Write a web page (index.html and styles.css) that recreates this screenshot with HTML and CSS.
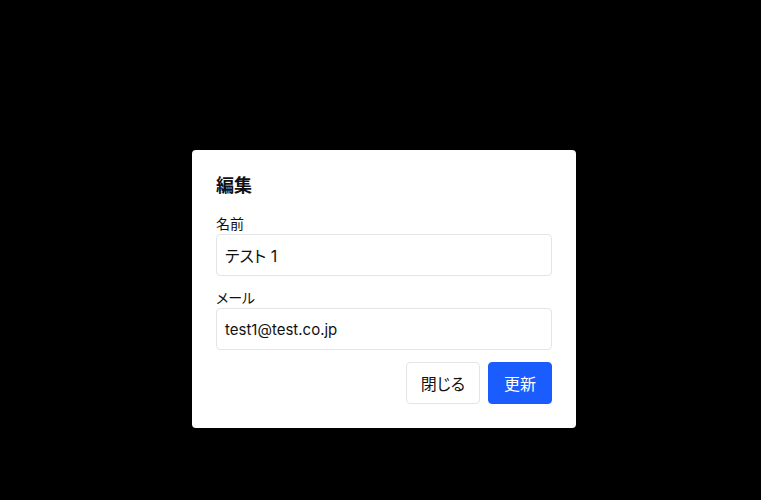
FILE: index.html
```html
<!DOCTYPE html>
<html lang="ja">
<head>
<meta charset="utf-8">
<title>編集</title>
<link rel="stylesheet" href="styles.css">
</head>
<body>
<div class="backdrop">
  <div class="modal">
    <h2 class="title">編集</h2>
    <div class="field">
      <label class="label">名前</label>
      <div class="input">テスト 1</div>
    </div>
    <div class="field">
      <label class="label">メール</label>
      <div class="input latin">test1@test.co.jp</div>
    </div>
    <div class="actions">
      <button class="btn btn-secondary">閉じる</button>
      <button class="btn btn-primary">更新</button>
    </div>
  </div>
</div>
</body>
</html>
```

FILE: styles.css
```css
html, body {
  margin: 0;
  padding: 0;
  background: #000;
  height: 100%;
}
body {
  font-family: Inter, "Noto Sans CJK JP", sans-serif;
  font-feature-settings: "palt";
  color: #111;
}
.backdrop {
  padding: 150px 0 0 192px;
}
.modal {
  width: 384px;
  box-sizing: border-box;
  background: #fff;
  border-radius: 4px;
  padding: 24px;
  display: flex;
  flex-direction: column;
}
.title {
  margin: 0 0 16px;
  font-size: 18px;
  line-height: 24px;
  font-weight: 700;
}
.field {
  display: flex;
  flex-direction: column;
  margin-bottom: 12px;
}
.label {
  font-size: 14px;
  line-height: 20px;
}
.input {
  height: 42px;
  box-sizing: border-box;
  border: 1px solid #e3e5e9;
  border-radius: 4px;
  padding: 0 8px;
  display: flex;
  align-items: center;
  font-size: 16px;
}
.latin {
  font-size: 15px;
}
.actions {
  display: flex;
  justify-content: flex-end;
  gap: 8px;
}
.btn {
  height: 42px;
  padding: 0 15px;
  border-radius: 4px;
  font-family: inherit;
  font-feature-settings: "palt";
  font-size: 16px;
  cursor: pointer;
}
.btn-secondary {
  padding: 0 14px;
  background: #fff;
  color: #111;
  border: 1px solid #e3e5e9;
}
.btn-primary {
  background: #1b5cfe;
  color: #fff;
  border: 1px solid #1b5cfe;
}
```
